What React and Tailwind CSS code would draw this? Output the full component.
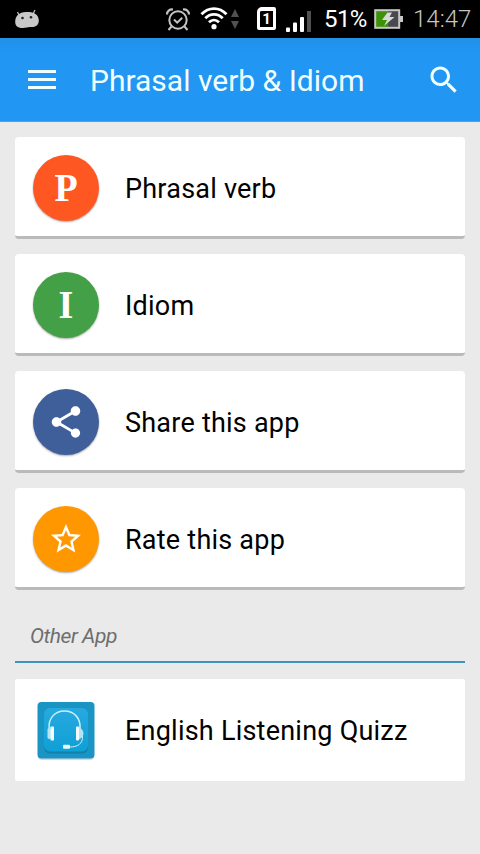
const items = [
  { label: 'Phrasal verb', color: 'bg-[#ff5722]', glyph: 'P' },
  { label: 'Idiom', color: 'bg-[#43a047]', glyph: 'I' },
  { label: 'Share this app', color: 'bg-[#3f5f9a]', icon: ShareIcon },
  { label: 'Rate this app', color: 'bg-[#ff9800]', icon: StarIcon },
]

function ShareIcon() {
  return (
    <svg width="38" height="38" viewBox="0 0 24 24" fill="#fff">
      <path d="M18 16.08c-.76 0-1.44.3-1.96.77L8.91 12.7c.05-.23.09-.46.09-.7s-.04-.47-.09-.7l7.05-4.11c.54.5 1.25.81 2.04.81 1.66 0 3-1.34 3-3s-1.34-3-3-3-3 1.34-3 3c0 .24.04.47.09.7L8.04 9.81C7.5 9.31 6.79 9 6 9c-1.66 0-3 1.34-3 3s1.34 3 3 3c.79 0 1.5-.31 2.04-.81l7.12 4.16c-.05.21-.08.43-.08.65 0 1.61 1.31 2.92 2.92 2.92s2.92-1.31 2.92-2.92-1.31-2.92-2.92-2.92z" />
    </svg>
  )
}

function StarIcon() {
  return (
    <svg width="36" height="36" viewBox="0 0 24 24" fill="#fff">
      <path d="M22 9.24l-7.19-.62L12 2 9.19 8.63 2 9.24l5.46 4.73L5.82 21 12 17.27 18.18 21l-1.63-7.03L22 9.24zM12 15.4l-3.76 2.27 1-4.28-3.32-2.88 4.38-.38L12 6.1l1.71 4.04 4.38.38-3.32 2.88 1 4.28L12 15.4z" />
    </svg>
  )
}

function HeadsetIcon() {
  return (
    <svg width="58" height="60" viewBox="0 0 58 60" fill="none">
      <defs>
        <linearGradient id="tile" x1="0" y1="0" x2="0" y2="1">
          <stop offset="0" stopColor="#27a9df" />
          <stop offset="1" stopColor="#0fa0d6" />
        </linearGradient>
      </defs>
      <rect x="1" y="3" width="56" height="56" rx="4" fill="#d3d9e6" />
      <rect x="0.5" y="1" width="57" height="56.5" rx="4" fill="#1a94c2" />
      <rect x="7" y="8.5" width="44" height="44" rx="6" fill="#127fae" />
      <rect x="7" y="7" width="44" height="43.5" rx="6" fill="url(#tile)" />
      <path d="M12.2 28C11 17 18 10 27.500 10S44 17 43 28" stroke="#c9f0fb" strokeWidth="1.5" />
      <rect x="10.5" y="27" width="3.5" height="11" rx="1.7" fill="#b5e4f3" />
      <rect x="13.5" y="25.5" width="3.5" height="14" rx="0.8" fill="#f2fcff" />
      <rect x="39" y="25.5" width="3" height="14" rx="0.8" fill="#f2fcff" />
      <path d="M42 26c3 2 4.500 4 4.500 6.500S44.500 37 42 38.500z" fill="#b5e4f3" />
      <path d="M45.500 35c.5 8-5 11-13 11" stroke="#c9f0fb" strokeWidth="1" />
      <rect x="26" y="43.700" width="7" height="4" rx="1" fill="#e8faff" />
    </svg>
  )
}

function StatusBar() {
  return (
    <div className="flex h-[38px] items-start bg-black text-[24px] leading-[38px]">
      <svg className="mt-[9px] ml-[14px]" width="26" height="20" viewBox="0 0 26 20">
        <path d="M3.500 3l2 4M21 1l-2 4" stroke="#bdbdbd" strokeWidth="1.300" />
        <path d="M1.200 13C1.200 7 5 3.300 12 3c7-.5 12.500 2 12.800 8 .2 5-2.800 7.300-7.800 7-3-.2-5 .8-8 1-5 .3-7.800-2-7.800-6z" fill="#c9c9c9" />
        <circle cx="8.500" cy="9" r="1.300" fill="#222" />
        <circle cx="17" cy="8.300" r="1.300" fill="#222" />
      </svg>

      <svg className="mt-[7px] ml-[125px]" width="26" height="26" viewBox="0 0 26 26" fill="none" stroke="#c4c4c4">
        <circle cx="13" cy="13" r="8.700" strokeWidth="2" />
        <path d="M2 7.500C2 4 4.500 2.200 8 2.500M24 7.500c0-3.500-2.500-5.300-6-5" strokeWidth="2.200" />
        <path d="M6.500 19.500L3.500 23M19.500 19.500l3 3.500" strokeWidth="2" />
        <path d="M9 12.500l3.200 3.200 5-5" strokeWidth="2" />
      </svg>

      <svg className="mt-[6px] ml-[9px]" width="28" height="25" viewBox="0 0 28 25" fill="none" stroke="#fff" strokeWidth="2.800">
        <path d="M1.500 8.300C8.500.8 19.500.8 26.500 8.300" />
        <path d="M5.300 12.300c5-5.200 12.400-5.200 17.400 0" />
        <path d="M9 16.300c3-3 7-3 10 0" />
        <circle cx="14" cy="20.700" r="2.600" fill="#fff" stroke="none" />
      </svg>

      <svg className="mt-[9px] ml-[3px]" width="8" height="20" viewBox="0 0 8 20" fill="#515151">
        <path d="M4 0l4 8H0zM4 20l4-8H0z" />
      </svg>

      <div className="mt-[7px] ml-[18px] flex h-[23px] w-[19px] items-center justify-center rounded-[2px] rounded-tl-[5px] border-[3px] border-t-[4px] border-white text-[15px] leading-none font-bold text-white">
        1
      </div>

      <svg className="mt-[11px] ml-[10px]" width="26" height="21" viewBox="0 0 26 21" fill="#fff">
        <rect x="0" y="16.500" width="4" height="4.500" rx="1" />
        <rect x="7" y="11.500" width="4" height="9.500" rx="1" />
        <rect x="14" y="6" width="4" height="15" rx="1" />
        <rect x="21" y="0" width="4" height="21" fill="#515151" />
      </svg>

      <span className="ml-[12px] w-[50px] tracking-[-0.6px] text-white">51%</span>

      <svg className="mt-[9px]" width="30" height="20" viewBox="0 0 30 20">
        <rect x="1.200" y="1.200" width="24" height="17.600" fill="#494950" />
        <rect x="1.200" y="1.200" width="13" height="17.600" fill="#3e9208" />
        <rect x="1.200" y="1.200" width="24" height="17.600" fill="none" stroke="#c8c8c8" strokeWidth="2" />
        <rect x="26" y="7" width="3" height="6" fill="#c8c8c8" />
        <path d="M13.500 3.500h4.500L15.500 8h5L10 17l3-6H8z" fill="#d8d8d8" />
      </svg>

      <span className="ml-[9px] font-light text-[#c6c6c6]">14:47</span>
    </div>
  )
}

function AppBar() {
  return (
    <header className="flex h-[84px] items-center border-b border-[#4ba3e6] bg-[#2196f3] bg-linear-to-b from-[#2090e5] from-0% to-[#2196f3] to-15% pr-[18px] pl-[28px]">
      <div className="flex w-[28px] flex-col gap-[5px]">
        <span className="h-[3px] bg-[#f0ffff]" />
        <span className="h-[3px] bg-[#f0ffff]" />
        <span className="h-[3px] bg-[#f0ffff]" />
      </div>
      <h1 className="ml-[34px] flex-1 pt-[3px] text-[30px] leading-[36px] whitespace-nowrap text-[#f0ffff]">
        Phrasal verb &amp; Idiom
      </h1>
      <svg width="36" height="36" viewBox="0 0 24 24" fill="#f0ffff">
        <path d="M15.500 14h-.79l-.28-.27C15.410 12.590 16 11.110 16 9.500 16 5.910 13.090 3 9.500 3S3 5.910 3 9.500 5.910 16 9.500 16c1.610 0 3.090-.59 4.230-1.570l.27.28v.79l5 4.990L20.490 19l-4.990-5zm-6 0C7.010 14 5 11.990 5 9.500S7.010 5 9.500 5 14 7.010 14 9.500 11.990 14 9.500 14z" />
      </svg>
    </header>
  )
}

function MenuCard({ label, color, glyph, icon: Icon }) {
  return (
    <div className="flex h-[102px] items-center rounded-[4px] border-b-[3px] border-[#bababa] bg-white pt-[3px] pl-[18px]">
      <div className={`flex size-[66px] items-center justify-center rounded-full shadow-[0_1px_2px_rgba(0,0,0,0.35)] ${color}`}>
        {glyph && (
          <span className="scale-x-95 font-['Liberation_Serif',serif] text-[40px] leading-none font-bold text-white">
            {glyph}
          </span>
        )}
        {Icon && <Icon />}
      </div>
      <span className="ml-[26px] pt-[2px] text-[27px] leading-[36px] tracking-[0.23px] text-black">{label}</span>
    </div>
  )
}

export default function App() {
  return (
    <div className="h-[854px] w-[480px] overflow-hidden bg-[#eaeaea] font-['Roboto',sans-serif]">
      <StatusBar />
      <AppBar />
      <main className="flex flex-col px-[15px] pt-[15px]">
        <div className="flex flex-col gap-[15px]">
          {items.map((item) => (
            <MenuCard key={item.label} {...item} />
          ))}
        </div>

        {/* Section heading */}
        <div className="mt-[31px] h-[42px] border-b-2 border-[#3d94bf] pl-[15px] text-[21px] leading-[30px] tracking-[-0.45px] text-[#6e6e6e] italic">
          Other App
        </div>

        <div className="mt-[16px] flex h-[102px] items-center rounded-[2px] bg-white pt-px pl-[22px]">
          <HeadsetIcon />
          <span className="ml-[30px] pt-px text-[27px] leading-[36px] tracking-[0.23px] text-black">
            English Listening Quizz
          </span>
        </div>
      </main>
    </div>
  )
}
